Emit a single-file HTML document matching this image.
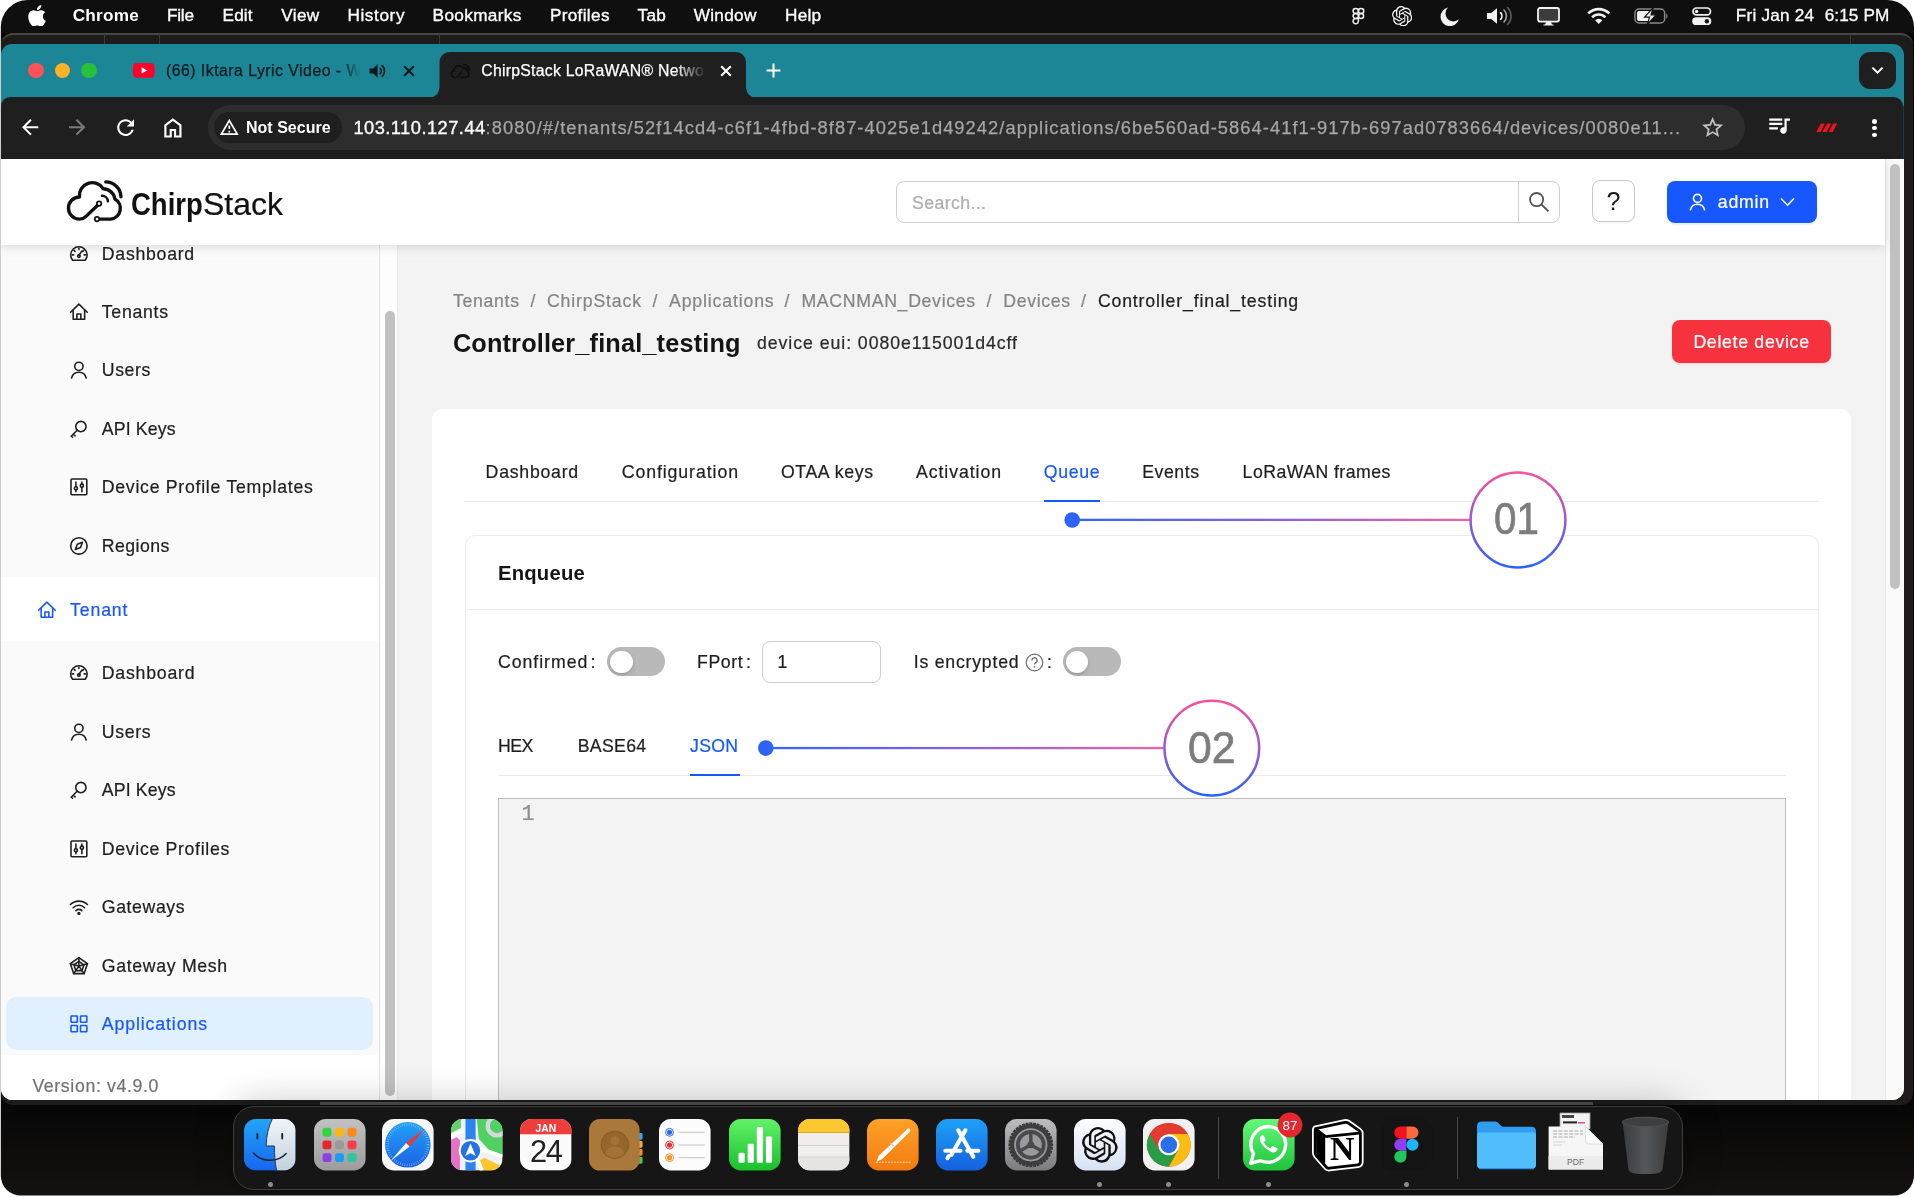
<!DOCTYPE html><html lang="en"><head><meta charset="utf-8"><title>ChirpStack LoRaWAN Network Server</title><style>html,body{margin:0;padding:0}body{width:1915px;height:1197px;overflow:hidden;background:#fff;position:relative;font-family:"Liberation Sans",sans-serif}.b{position:absolute;display:block}.t{position:absolute;white-space:pre;display:block}#screen{position:absolute;left:0;top:0;width:1915px;height:1197px;background:linear-gradient(#060606 1104px,#141210 1195px);will-change:transform}#win{position:absolute;left:1px;top:44px;width:1902.8px;height:1056.4px;border-radius:11px 11px 12px 12px;overflow:hidden}#wi{position:absolute;left:-1px;top:-44px;width:1915px;height:1197px}</style></head><body><div id="screen">
<div class="b" style="left:0px;top:0px;width:1915px;height:33px;background:#0f0f0f;"></div>
<div class="b" style="left:1px;top:32.6px;width:1912.4px;height:1072px;background:#1d1c1b;border-top:2px solid #474747;border-radius:12px;box-sizing:border-box;"></div>
<div class="b" style="left:104px;top:34px;width:1px;height:10px;background:#3a3a3a;"></div>
<div class="b" style="left:159px;top:34px;width:1px;height:10px;background:#3a3a3a;"></div>
<div class="b" style="left:439px;top:34px;width:1px;height:10px;background:#3a3a3a;"></div>
<div class="b" style="left:1850px;top:34px;width:1px;height:10px;background:#3a3a3a;"></div>
<svg class="b" style="left:26.5px;top:4.5px;" width="20" height="21.5" viewBox="2 0 20 24"><path fill="#fff" d="M12.152 6.896c-.948 0-2.415-1.078-3.96-1.04-2.04.027-3.91 1.183-4.961 3.014-2.117 3.675-.546 9.103 1.519 12.09 1.013 1.454 2.208 3.09 3.792 3.039 1.52-.065 2.09-.987 3.935-.987 1.831 0 2.35.987 3.96.948 1.637-.026 2.676-1.48 3.676-2.948 1.156-1.688 1.636-3.325 1.662-3.415-.039-.013-3.182-1.221-3.22-4.857-.026-3.04 2.48-4.494 2.597-4.559-1.429-2.09-3.623-2.324-4.39-2.376-2-.156-3.675 1.09-4.61 1.09zM15.53 3.83c.843-1.012 1.4-2.427 1.245-3.83-1.207.052-2.662.805-3.532 1.818-.78.896-1.454 2.338-1.273 3.714 1.338.104 2.715-.688 3.559-1.701"/></svg>
<span class="t" style='left:72.70px;top:5.44px;font-size:17.2px;line-height:20.64px;color:#fff;font-weight:700;letter-spacing:0.229px;'>Chrome</span>
<span class="t" style='left:166.90px;top:5.44px;font-size:17.2px;line-height:20.64px;color:#fff;letter-spacing:-0.201px;-webkit-text-stroke:0.35px #fff;'>File</span>
<span class="t" style='left:222.60px;top:5.44px;font-size:17.2px;line-height:20.64px;color:#fff;letter-spacing:0.125px;-webkit-text-stroke:0.35px #fff;'>Edit</span>
<span class="t" style='left:281.20px;top:5.44px;font-size:17.2px;line-height:20.64px;color:#fff;letter-spacing:0.382px;-webkit-text-stroke:0.35px #fff;'>View</span>
<span class="t" style='left:347.40px;top:5.44px;font-size:17.2px;line-height:20.64px;color:#fff;letter-spacing:0.603px;-webkit-text-stroke:0.35px #fff;'>History</span>
<span class="t" style='left:432.60px;top:5.44px;font-size:17.2px;line-height:20.64px;color:#fff;letter-spacing:0.341px;-webkit-text-stroke:0.35px #fff;'>Bookmarks</span>
<span class="t" style='left:549.90px;top:5.44px;font-size:17.2px;line-height:20.64px;color:#fff;letter-spacing:0.327px;-webkit-text-stroke:0.35px #fff;'>Profiles</span>
<span class="t" style='left:637.60px;top:5.44px;font-size:17.2px;line-height:20.64px;color:#fff;letter-spacing:0.191px;-webkit-text-stroke:0.35px #fff;'>Tab</span>
<span class="t" style='left:693.70px;top:5.44px;font-size:17.2px;line-height:20.64px;color:#fff;letter-spacing:0.312px;-webkit-text-stroke:0.35px #fff;'>Window</span>
<span class="t" style='left:785.00px;top:5.44px;font-size:17.2px;line-height:20.64px;color:#fff;letter-spacing:0.214px;-webkit-text-stroke:0.35px #fff;'>Help</span>
<span class="t" style='left:1735.80px;top:5.44px;font-size:17.2px;line-height:20.64px;color:#fff;letter-spacing:0.198px;-webkit-text-stroke:0.3px #fff;'>Fri Jan 24</span>
<span class="t" style='left:1824.70px;top:5.44px;font-size:17.2px;line-height:20.64px;color:#fff;letter-spacing:0.097px;-webkit-text-stroke:0.3px #fff;'>6:15 PM</span>
<svg class="b" style="left:1351.6px;top:7.4px;" width="13.4" height="18" viewBox="0 0 15 19"><g fill="none" stroke="#f2f2f2" stroke-width="1.7"><rect x="1.2" y="1" width="6" height="5.6" rx="2.8"/><rect x="7.2" y="1" width="6" height="5.6" rx="2.8"/><rect x="1.2" y="6.6" width="6" height="5.6" rx="2.8"/><circle cx="10.2" cy="9.4" r="2.8"/><path d="M7.2 12.2v2.9a3 3 0 1 1-3-2.9z"/></g></svg>
<svg class="b" style="left:1392px;top:5.8px;" width="20.4" height="20.4" viewBox="0 0 24 24"><path fill="#f2f2f2" d="M22.2819 9.8211a5.9847 5.9847 0 0 0-.5157-4.9108 6.0462 6.0462 0 0 0-6.5098-2.9A6.0651 6.0651 0 0 0 4.9807 4.1818a5.9847 5.9847 0 0 0-3.9977 2.9 6.0462 6.0462 0 0 0 .7427 7.0966 5.98 5.98 0 0 0 .511 4.9107 6.051 6.051 0 0 0 6.5146 2.9001A5.9847 5.9847 0 0 0 13.2599 24a6.0557 6.0557 0 0 0 5.7718-4.2058 5.9894 5.9894 0 0 0 3.9977-2.9001 6.0557 6.0557 0 0 0-.7475-7.0729zm-9.022 12.6081a4.4755 4.4755 0 0 1-2.8764-1.0408l.1419-.0804 4.7783-2.7582a.7948.7948 0 0 0 .3927-.6813v-6.7369l2.02 1.1686a.071.071 0 0 1 .038.052v5.5826a4.504 4.504 0 0 1-4.4945 4.4944zm-9.6607-4.1254a4.4708 4.4708 0 0 1-.5346-3.0137l.142.0852 4.783 2.7582a.7712.7712 0 0 0 .7806 0l5.8428-3.3685v2.3324a.0804.0804 0 0 1-.0332.0615L9.74 19.9502a4.4992 4.4992 0 0 1-6.1408-1.6464zM2.3408 7.8956a4.485 4.485 0 0 1 2.3655-1.9728V11.6a.7664.7664 0 0 0 .3879.6765l5.8144 3.3543-2.0201 1.1685a.0757.0757 0 0 1-.071 0l-4.8303-2.7865A4.504 4.504 0 0 1 2.3408 7.872zm16.5963 3.8558L13.1038 8.364 15.1192 7.2a.0757.0757 0 0 1 .071 0l4.8303 2.7913a4.4944 4.4944 0 0 1-.6765 8.1042v-5.6772a.79.79 0 0 0-.407-.667zm2.0107-3.0231l-.142-.0852-4.7735-2.7818a.7759.7759 0 0 0-.7854 0L9.409 9.2297V6.8974a.0662.0662 0 0 1 .0284-.0615l4.8303-2.7866a4.4992 4.4992 0 0 1 6.6802 4.66zM8.3065 12.863l-2.02-1.1638a.0804.0804 0 0 1-.038-.0567V6.0742a4.4992 4.4992 0 0 1 7.3757-3.4537l-.142.0805L8.704 5.459a.7948.7948 0 0 0-.3927.6813zm1.0976-2.3654l2.602-1.4998 2.6069 1.4998v2.9994l-2.5974 1.4997-2.6067-1.4997Z"/></svg>
<svg class="b" style="left:1440px;top:6.5px;" width="19.5" height="19.5" viewBox="0 0 20 20"><path fill="#f2f2f2" d="M8.2 0.6A9.6 9.6 0 1 0 19.4 12.6 7.9 7.9 0 0 1 8.2 0.6z"/></svg>
<svg class="b" style="left:1486px;top:6px;" width="28" height="20" viewBox="0 0 28 20"><path fill="#f2f2f2" d="M1 7h4.2L11 2.2v15.6L5.2 13H1z"/><g fill="none" stroke-linecap="round" stroke-width="1.7"><path stroke="#f2f2f2" d="M14.6 6.6a5 5 0 0 1 0 6.8"/><path stroke="#9a9a9a" d="M18 4a8.6 8.6 0 0 1 0 12"/><path stroke="#5a5a5a" d="M21.6 1.6a12 12 0 0 1 0 16.8"/></g></svg>
<svg class="b" style="left:1537px;top:7px;" width="23" height="19" viewBox="0 0 23 19"><rect x="1" y="1" width="21" height="13.6" rx="2" fill="#3d3d3d" stroke="#f2f2f2" stroke-width="1.8"/><path fill="#f2f2f2" d="M9 15h5l1 2.4h1.6V18.6H6.4V17.4H8z"/></svg>
<svg class="b" style="left:1586.5px;top:7px;" width="23.5" height="17.5" viewBox="0 0 24 18"><g fill="none" stroke="#f2f2f2" stroke-width="2.7" stroke-linecap="butt"><path d="M1.2 6.6a15.4 15.4 0 0 1 21.6 0"/><path d="M5.2 10.6a9.6 9.6 0 0 1 13.6 0"/></g><path fill="#f2f2f2" d="M12 17.6l-3.7-3.9a5.2 5.2 0 0 1 7.4 0z"/></svg>
<svg class="b" style="left:1633.5px;top:8px;" width="35" height="16" viewBox="0 0 35 16"><rect x="1" y="1" width="29.6" height="14" rx="4" fill="none" stroke="#8a8a8a" stroke-width="1.5"/><rect x="3" y="3" width="13" height="10" rx="2" fill="#f2f2f2"/><path d="M32.2 5.4c1.6.4 1.6 4.8 0 5.2z" fill="#8a8a8a"/><path fill="#f2f2f2" stroke="#0f0f0f" stroke-width="1.2" d="M19.4 -0.6L10.6 9.2h5l-2.4 7.6L22 6.8h-5z"/></svg>
<svg class="b" style="left:1692px;top:6.8px;" width="19.5" height="18.4" viewBox="0 0 19.5 18.4"><rect x="1" y="1" width="17.5" height="6.8" rx="3.4" fill="none" stroke="#f2f2f2" stroke-width="1.7"/><circle cx="4.6" cy="4.4" r="1.7" fill="#f2f2f2"/><rect x="0.2" y="10.2" width="19.1" height="8" rx="4" fill="#f2f2f2"/><circle cx="14.9" cy="14.2" r="2.2" fill="#0f0f0f"/></svg>
<div id="win"><div id="wi">
<div class="b" style="left:0px;top:44px;width:1904px;height:62px;background:#1c8696;"></div>
<div class="b" style="left:0px;top:106px;width:1904px;height:54px;background:#1b3a48;"></div>
<div class="b" style="left:1px;top:97px;width:1902px;height:62.2px;background:#1f1f1f;border-radius:9px 9px 0 0;"></div>
<svg class="b" style="left:425px;top:50px;" width="340" height="48" viewBox="425 50 340 48"><path fill="#1f1f1f" d="M428 98 C436 97.5 439.5 93 439.5 86 V63 C439.5 56 444 52 450.5 52 H735 C741.5 52 746 56 746 63 V86 C746 93 749.5 97.5 758 98 Z"/></svg>
<div class="b" style="left:28.400000000000002px;top:62.8px;width:15.6px;height:15.6px;border-radius:50%;background:#fe5258;"></div>
<div class="b" style="left:54.800000000000004px;top:62.8px;width:15.6px;height:15.6px;border-radius:50%;background:#fdb226;"></div>
<div class="b" style="left:81.3px;top:62.8px;width:15.6px;height:15.6px;border-radius:50%;background:#27c13c;"></div>
<svg class="b" style="left:133px;top:63.2px;" width="21.6" height="14.8" viewBox="0 0 21.6 14.8"><rect width="21.6" height="14.8" rx="4" fill="#ff0229"/><path fill="#fff" d="M8.6 4.2l5.6 3.2-5.6 3.2z"/></svg>
<span class="t" style='left:165.90px;top:61.68px;font-size:15.8px;line-height:18.96px;color:#0c181c;letter-spacing:0.496px;-webkit-text-stroke:0.25px #0c181c;-webkit-mask-image:linear-gradient(90deg,#000 90%,rgba(0,0,0,0) 99%);mask-image:linear-gradient(90deg,#000 90%,rgba(0,0,0,0) 99%);'>(66) Iktara Lyric Video - W</span>
<svg class="b" style="left:368.5px;top:62.5px;" width="17" height="16" viewBox="0 0 17 16"><path fill="#0c181c" d="M0.6 5.4h3.6L8.6 1.2v13.6L4.2 10.6H0.6z"/><g fill="none" stroke="#0c181c" stroke-width="1.7" stroke-linecap="round"><path d="M11.2 5.4a3.6 3.6 0 0 1 0 5.2"/><path d="M13.2 2.6a7.4 7.4 0 0 1 0 10.8"/></g></svg>
<svg class="b" style="left:402.5px;top:64.6px;" width="12" height="12" viewBox="0 0 12 12"><path d="M1.2 1.2l9.6 9.6M10.8 1.2l-9.6 9.6" stroke="#0c181c" stroke-width="2" fill="none"/></svg>
<svg class="b" style="left:449.5px;top:60.5px;" width="21" height="20" viewBox="0 0 21 20"><g fill="none" stroke="#0e0e0e" stroke-width="1.6" stroke-linecap="round"><path d="M6 16.5H4.8a3.6 3.6 0 0 1-.6-7.1 4.6 4.6 0 0 1 8.6-2.2 4.2 4.2 0 0 1 5.6 4 3.4 3.4 0 0 1-2.2 5.2H11"/><path d="M7 16.2l4.6-5.2"/><path d="M13.2 6.2a4 4 0 0 1 3.4 3.4M13.6 3.4a6.6 6.6 0 0 1 5.8 5.8"/></g></svg>
<span class="t" style='left:481.30px;top:61.68px;font-size:15.8px;line-height:18.96px;color:#fff;letter-spacing:0.251px;-webkit-text-stroke:0.25px #fff;-webkit-mask-image:linear-gradient(90deg,#000 87%,rgba(0,0,0,.12) 99%);mask-image:linear-gradient(90deg,#000 87%,rgba(0,0,0,.12) 99%);'>ChirpStack LoRaWAN® Netwo</span>
<svg class="b" style="left:719.5px;top:64.6px;" width="12" height="12" viewBox="0 0 12 12"><path d="M1.2 1.2l9.6 9.6M10.8 1.2l-9.6 9.6" stroke="#fff" stroke-width="2" fill="none"/></svg>
<svg class="b" style="left:765.5px;top:63px;" width="15" height="15" viewBox="0 0 15 15"><path d="M7.5 0.6v13.8M0.6 7.5h13.8" stroke="#fff" stroke-width="2.1" fill="none"/></svg>
<div class="b" style="left:1859px;top:52px;width:36.8px;height:36.8px;background:#1f1f1f;border-radius:11px;"></div>
<svg class="b" style="left:1871px;top:65.8px;" width="13" height="9" viewBox="0 0 13 9"><path d="M1.4 1.6l5.1 5.1 5.1-5.1" stroke="#fff" stroke-width="2" fill="none"/></svg>
<svg class="b" style="left:17.7px;top:115.3px;" width="24.4" height="24.4" viewBox="0 0 24 24"><path fill="#fff" d="M20 11H7.83l5.59-5.59L12 4l-8 8 8 8 1.41-1.41L7.83 13H20v-2z"/></svg>
<svg class="b" style="left:64.7px;top:115.3px;" width="24.4" height="24.4" viewBox="0 0 24 24"><path fill="#7b7b7b" d="M12 4l-1.41 1.41L16.17 11H4v2h12.17l-5.58 5.59L12 20l8-8z"/></svg>
<svg class="b" style="left:112.8px;top:114.9px;" width="25.2" height="25.2" viewBox="0 0 24 24"><path fill="#fff" d="M17.65 6.35C16.2 4.9 14.21 4 12 4c-4.42 0-7.99 3.58-7.99 8s3.57 8 7.99 8c3.73 0 6.84-2.55 7.73-6h-2.08c-.82 2.33-3.04 4-5.65 4-3.31 0-6-2.69-6-6s2.69-6 6-6c1.66 0 3.14.69 4.22 1.78L13 11h7V4l-2.35 2.35z"/></svg>
<svg class="b" style="left:159.5px;top:114.6px;" width="25.8" height="25.8" viewBox="0 0 24 24"><path fill="#fff" d="M6 19h3v-6h6v6h3v-9l-6-4.5L6 10zm-2 2V9l8-6 8 6v12h-7v-6h-2v6z"/></svg>
<div class="b" style="left:207.5px;top:105.2px;width:1537px;height:44.5px;background:#2d2d2d;border-radius:22.3px;"></div>
<div class="b" style="left:214px;top:111.8px;width:128px;height:31.4px;background:#1f1f1f;border-radius:16px;"></div>
<svg class="b" style="left:219.1px;top:116.9px;" width="20.6" height="20.6" viewBox="0 0 24 24"><path fill="#fff" d="M1 21h22L12 2 1 21zm3.47-2L12 5.99 19.53 19H4.47zM11 16h2v2h-2zm0-6h2v4h-2z"/></svg>
<span class="t" style='left:246.00px;top:118.46px;font-size:16px;line-height:19.2px;color:#fff;font-weight:700;letter-spacing:0.015px;'>Not Secure</span>
<span class="t" style='left:353.40px;top:116.88px;font-size:18.3px;line-height:21.96px;color:#fff;letter-spacing:0.468px;-webkit-text-stroke:0.3px #fff;'>103.110.127.44</span>
<span class="t" style='left:485.60px;top:116.88px;font-size:18.3px;line-height:21.96px;color:#a6a6a6;letter-spacing:1.063px;-webkit-text-stroke:0.25px #a6a6a6;'>:8080/#/tenants/52f14cd4-c6f1-4fbd-8f87-4025e1d49242/applications/6be560ad-5864-41f1-917b-697ad0783664/devices/0080e11...</span>
<svg class="b" style="left:1699.9px;top:115.2px;" width="25.2" height="25.2" viewBox="0 0 24 24"><path fill="#c4c4c4" d="M22 9.24l-7.19-.62L12 2 9.19 8.63 2 9.24l5.46 4.73L5.82 21 12 17.27 18.18 21l-1.63-7.03L22 9.24zM12 15.4l-3.76 2.27 1-4.28-3.32-2.88 4.38-.38L12 6.1l1.71 4.04 4.38.38-3.32 2.88 1 4.28L12 15.4z"/></svg>
<svg class="b" style="left:1765.7px;top:111.9px;" width="26.1" height="26.1" viewBox="0 0 24 24"><path fill="#fff" d="M15 6H3v2h12V6zm0 4H3v2h12v-2zM3 16h8v-2H3v2zM17 6v8.18c-.31-.11-.65-.18-1-.18-1.66 0-3 1.34-3 3s1.34 3 3 3 3-1.34 3-3V8h3V6h-5z"/></svg>
<svg class="b" style="left:1816px;top:123.4px;" width="21.4" height="9.2" viewBox="0 0 21.4 9.2"><path fill="#f3121c" d="M0.4 9l4.4-8.6h4L4.4 9zM6.6 9L11 .4h4L10.6 9zM12.8 9l4.4-8.6h4L16.8 9z"/></svg>
<div class="b" style="left:1872.2px;top:119.0px;width:4.6px;height:4.6px;border-radius:50%;background:#fff;"></div>
<div class="b" style="left:1872.2px;top:125.7px;width:4.6px;height:4.6px;border-radius:50%;background:#fff;"></div>
<div class="b" style="left:1872.2px;top:132.5px;width:4.6px;height:4.6px;border-radius:50%;background:#fff;"></div>
<div class="b" style="left:0px;top:159px;width:1904px;height:942px;background:#f3f3f3;"></div>
<div class="b" style="left:0px;top:244px;width:379.3px;height:856px;background:#fafafa;"></div>
<div class="b" style="left:378.6px;top:244px;width:19.6px;height:856px;background:#fdfdfd;border-left:1.6px solid #e4e4e4;border-right:1px solid #e9e9e9;box-sizing:border-box;"></div>
<div class="b" style="left:385px;top:310.5px;width:10px;height:785px;background:#c1c1c1;border-radius:5px;"></div>
<svg class="b" style="left:69px;top:243.5px;" width="19.8" height="19.8" viewBox="0 0 20 20"><g fill="none" stroke="#1f1f1f" stroke-width="1.6" stroke-linecap="round" stroke-linejoin="round"><path d="M3.6 16.4h12.8a8.3 8.3 0 1 0-12.8 0z"/><path d="M10 11.4l3-4.2"/><circle cx="10" cy="12.2" r="1.3"/><path d="M10 4.3v1.2M5.2 6.5l.9.9M14.8 6.5l-.9.9M3.4 11h1.2M15.4 11h1.2"/></g></svg>
<span class="t" style='left:101.80px;top:243.54px;font-size:17.7px;line-height:21.24px;color:#1f1f1f;letter-spacing:0.734px;-webkit-text-stroke:0.22px;'>Dashboard</span>
<svg class="b" style="left:69px;top:301.9px;" width="19.8" height="19.8" viewBox="0 0 20 20"><g fill="none" stroke="#1f1f1f" stroke-width="1.6" stroke-linecap="round" stroke-linejoin="round"><path d="M1.6 10.4L10 2.2l8.4 8.2"/><path d="M4.2 8.4v9h11.6v-9"/><path d="M8 17.4v-5.2h4v5.2"/></g></svg>
<span class="t" style='left:101.80px;top:301.94px;font-size:17.7px;line-height:21.24px;color:#1f1f1f;letter-spacing:0.724px;-webkit-text-stroke:0.22px;'>Tenants</span>
<svg class="b" style="left:69px;top:360.4px;" width="19.8" height="19.8" viewBox="0 0 20 20"><g fill="none" stroke="#1f1f1f" stroke-width="1.6" stroke-linecap="round" stroke-linejoin="round"><circle cx="10" cy="6.4" r="4.2"/><path d="M2.6 18.2a7.6 7.6 0 0 1 14.8 0"/></g></svg>
<span class="t" style='left:101.80px;top:360.44px;font-size:17.7px;line-height:21.24px;color:#1f1f1f;letter-spacing:0.599px;-webkit-text-stroke:0.22px;'>Users</span>
<svg class="b" style="left:69px;top:418.9px;" width="19.8" height="19.8" viewBox="0 0 20 20"><g fill="none" stroke="#1f1f1f" stroke-width="1.6" stroke-linecap="round" stroke-linejoin="round"><circle cx="12" cy="7.6" r="5.2"/><path d="M8.2 11.4l-6 6M4.4 15.2l1.8 1.8M2.4 17.2l1.2 1.2"/></g></svg>
<span class="t" style='left:101.80px;top:418.94px;font-size:17.7px;line-height:21.24px;color:#1f1f1f;letter-spacing:0.150px;-webkit-text-stroke:0.22px;'>API Keys</span>
<svg class="b" style="left:69px;top:477.4px;" width="19.8" height="19.8" viewBox="0 0 20 20"><g fill="none" stroke="#1f1f1f" stroke-width="1.6" stroke-linecap="round" stroke-linejoin="round"><rect x="2" y="2" width="16" height="16" rx="1"/><path d="M7 5.2v4.4M7 13.2v1.6M13 5.2v1.8M13 10.6v4.2"/><circle cx="7" cy="11.4" r="1.6"/><circle cx="13" cy="8.8" r="1.6"/></g></svg>
<span class="t" style='left:101.80px;top:477.44px;font-size:17.7px;line-height:21.24px;color:#1f1f1f;letter-spacing:0.725px;-webkit-text-stroke:0.22px;'>Device Profile Templates</span>
<svg class="b" style="left:69px;top:535.9px;" width="19.8" height="19.8" viewBox="0 0 20 20"><g fill="none" stroke="#1f1f1f" stroke-width="1.6" stroke-linecap="round" stroke-linejoin="round"><circle cx="10" cy="10" r="8.3"/><path d="M13.6 6.4l-2 5.2-5.2 2 2-5.2z"/></g></svg>
<span class="t" style='left:101.80px;top:535.94px;font-size:17.7px;line-height:21.24px;color:#1f1f1f;letter-spacing:0.449px;-webkit-text-stroke:0.22px;'>Regions</span>
<div class="b" style="left:0px;top:577px;width:379.3px;height:64px;background:#fff;"></div>
<svg class="b" style="left:37px;top:599.9px;" width="19.8" height="19.8" viewBox="0 0 20 20"><g fill="none" stroke="#1657ff" stroke-width="1.6" stroke-linecap="round" stroke-linejoin="round"><path d="M1.6 10.4L10 2.2l8.4 8.2"/><path d="M4.2 8.4v9h11.6v-9"/><path d="M8 17.4v-5.2h4v5.2"/></g></svg>
<span class="t" style='left:70.00px;top:599.54px;font-size:17.7px;line-height:21.24px;color:#1657ff;letter-spacing:0.878px;-webkit-text-stroke:0.22px;'>Tenant</span>
<svg class="b" style="left:69px;top:663.3px;" width="19.8" height="19.8" viewBox="0 0 20 20"><g fill="none" stroke="#1f1f1f" stroke-width="1.6" stroke-linecap="round" stroke-linejoin="round"><path d="M3.6 16.4h12.8a8.3 8.3 0 1 0-12.8 0z"/><path d="M10 11.4l3-4.2"/><circle cx="10" cy="12.2" r="1.3"/><path d="M10 4.3v1.2M5.2 6.5l.9.9M14.8 6.5l-.9.9M3.4 11h1.2M15.4 11h1.2"/></g></svg>
<span class="t" style='left:101.80px;top:663.34px;font-size:17.7px;line-height:21.24px;color:#1f1f1f;letter-spacing:0.784px;-webkit-text-stroke:0.22px;'>Dashboard</span>
<svg class="b" style="left:69px;top:721.8px;" width="19.8" height="19.8" viewBox="0 0 20 20"><g fill="none" stroke="#1f1f1f" stroke-width="1.6" stroke-linecap="round" stroke-linejoin="round"><circle cx="10" cy="6.4" r="4.2"/><path d="M2.6 18.2a7.6 7.6 0 0 1 14.8 0"/></g></svg>
<span class="t" style='left:101.80px;top:721.84px;font-size:17.7px;line-height:21.24px;color:#1f1f1f;letter-spacing:0.649px;-webkit-text-stroke:0.22px;'>Users</span>
<svg class="b" style="left:69px;top:780.3px;" width="19.8" height="19.8" viewBox="0 0 20 20"><g fill="none" stroke="#1f1f1f" stroke-width="1.6" stroke-linecap="round" stroke-linejoin="round"><circle cx="12" cy="7.6" r="5.2"/><path d="M8.2 11.4l-6 6M4.4 15.2l1.8 1.8M2.4 17.2l1.2 1.2"/></g></svg>
<span class="t" style='left:101.80px;top:780.34px;font-size:17.7px;line-height:21.24px;color:#1f1f1f;letter-spacing:0.150px;-webkit-text-stroke:0.22px;'>API Keys</span>
<svg class="b" style="left:69px;top:838.8px;" width="19.8" height="19.8" viewBox="0 0 20 20"><g fill="none" stroke="#1f1f1f" stroke-width="1.6" stroke-linecap="round" stroke-linejoin="round"><rect x="2" y="2" width="16" height="16" rx="1"/><path d="M7 5.2v4.4M7 13.2v1.6M13 5.2v1.8M13 10.6v4.2"/><circle cx="7" cy="11.4" r="1.6"/><circle cx="13" cy="8.8" r="1.6"/></g></svg>
<span class="t" style='left:101.80px;top:838.84px;font-size:17.7px;line-height:21.24px;color:#1f1f1f;letter-spacing:0.681px;-webkit-text-stroke:0.22px;'>Device Profiles</span>
<svg class="b" style="left:69px;top:897.3px;" width="19.8" height="19.8" viewBox="0 0 20 20"><g fill="none" stroke="#1f1f1f" stroke-width="1.6" stroke-linecap="round" stroke-linejoin="round"><path d="M1.4 7.6a12.4 12.4 0 0 1 17.2 0M4.2 10.8a8.2 8.2 0 0 1 11.6 0M7 13.8a4.2 4.2 0 0 1 6 0"/><circle cx="10" cy="16.6" r="0.9" fill="#1f1f1f"/></g></svg>
<span class="t" style='left:101.80px;top:897.34px;font-size:17.7px;line-height:21.24px;color:#1f1f1f;letter-spacing:0.592px;-webkit-text-stroke:0.22px;'>Gateways</span>
<svg class="b" style="left:69px;top:955.8px;" width="19.8" height="19.8" viewBox="0 0 20 20"><g fill="none" stroke="#1f1f1f" stroke-width="1.6" stroke-linecap="round" stroke-linejoin="round"><path d="M10 1.6l8.6 6.2-3.3 10H4.7l-3.3-10z"/><path d="M10 5.4l5 3.6-1.9 5.8H6.9L5 9z"/><path d="M10 1.6v8.6M1.4 7.8l8.6 2.4M18.6 7.8L10 10.2M4.7 17.8l5.3-7.6M15.3 17.8L10 10.2"/></g></svg>
<span class="t" style='left:101.80px;top:955.84px;font-size:17.7px;line-height:21.24px;color:#1f1f1f;letter-spacing:0.676px;-webkit-text-stroke:0.22px;'>Gateway Mesh</span>
<div class="b" style="left:5.5px;top:997.2px;width:367px;height:53px;background:#e1f0ff;border-radius:10px;"></div>
<svg class="b" style="left:69px;top:1014.3px;" width="19.8" height="19.8" viewBox="0 0 20 20"><g fill="none" stroke="#1657ff" stroke-width="1.6" stroke-linecap="round" stroke-linejoin="round"><rect x="2" y="2" width="6.4" height="6.4" rx=".6"/><rect x="11.6" y="2" width="6.4" height="6.4" rx=".6"/><rect x="2" y="11.6" width="6.4" height="6.4" rx=".6"/><rect x="11.6" y="11.6" width="6.4" height="6.4" rx=".6"/></g></svg>
<span class="t" style='left:101.80px;top:1014.34px;font-size:17.7px;line-height:21.24px;color:#1657ff;letter-spacing:0.893px;-webkit-text-stroke:0.22px;'>Applications</span>
<div class="b" style="left:0px;top:1055px;width:379.3px;height:46px;background:#fff;"></div>
<span class="t" style='left:32.40px;top:1076.14px;font-size:17.7px;line-height:21.24px;color:#737373;letter-spacing:0.642px;-webkit-text-stroke:0.22px;'>Version: v4.9.0</span>
<span class="t" style='left:452.90px;top:291.14px;font-size:17.7px;line-height:21.24px;color:#858585;letter-spacing:0.691px;-webkit-text-stroke:0.22px;'>Tenants</span>
<span class="t" style='left:530.60px;top:291.14px;font-size:17.7px;line-height:21.24px;color:#858585;letter-spacing:1.478px;-webkit-text-stroke:0.22px;'>/</span>
<span class="t" style='left:547.00px;top:291.14px;font-size:17.7px;line-height:21.24px;color:#858585;letter-spacing:0.832px;-webkit-text-stroke:0.22px;'>ChirpStack</span>
<span class="t" style='left:652.40px;top:291.14px;font-size:17.7px;line-height:21.24px;color:#858585;letter-spacing:1.478px;-webkit-text-stroke:0.22px;'>/</span>
<span class="t" style='left:669.00px;top:291.14px;font-size:17.7px;line-height:21.24px;color:#858585;letter-spacing:0.848px;-webkit-text-stroke:0.22px;'>Applications</span>
<span class="t" style='left:784.60px;top:291.14px;font-size:17.7px;line-height:21.24px;color:#858585;letter-spacing:1.478px;-webkit-text-stroke:0.22px;'>/</span>
<span class="t" style='left:801.40px;top:291.14px;font-size:17.7px;line-height:21.24px;color:#858585;letter-spacing:0.690px;-webkit-text-stroke:0.22px;'>MACNMAN_Devices</span>
<span class="t" style='left:986.60px;top:291.14px;font-size:17.7px;line-height:21.24px;color:#858585;letter-spacing:1.478px;-webkit-text-stroke:0.22px;'>/</span>
<span class="t" style='left:1003.30px;top:291.14px;font-size:17.7px;line-height:21.24px;color:#858585;letter-spacing:0.630px;-webkit-text-stroke:0.22px;'>Devices</span>
<span class="t" style='left:1081.00px;top:291.14px;font-size:17.7px;line-height:21.24px;color:#858585;letter-spacing:1.478px;-webkit-text-stroke:0.22px;'>/</span>
<span class="t" style='left:1097.90px;top:291.14px;font-size:17.7px;line-height:21.24px;color:#1f1f1f;letter-spacing:0.843px;-webkit-text-stroke:0.22px;'>Controller_final_testing</span>
<span class="t" style='left:452.90px;top:328.21px;font-size:25.3px;line-height:30.36px;color:#141414;font-weight:700;letter-spacing:0.159px;'>Controller_final_testing</span>
<span class="t" style='left:757.00px;top:332.54px;font-size:17.7px;line-height:21.24px;color:#2a2a2a;letter-spacing:0.948px;-webkit-text-stroke:0.22px;'>device eui: 0080e115001d4cff</span>
<div class="b" style="left:1671.6px;top:320.4px;width:159.4px;height:42.6px;background:#f7323f;border-radius:8px;box-shadow:0 2px 2px rgba(255,38,5,.08);"></div>
<span class="t" style='left:1693.40px;top:332.24px;font-size:17.7px;line-height:21.24px;color:#fff;letter-spacing:0.702px;-webkit-text-stroke:0.22px;'>Delete device</span>
<div class="b" style="left:431.8px;top:409px;width:1419.4px;height:700px;background:#fff;border-radius:10px;"></div>
<span class="t" style='left:485.60px;top:462.24px;font-size:17.7px;line-height:21.24px;color:#1f1f1f;letter-spacing:0.759px;-webkit-text-stroke:0.22px;'>Dashboard</span>
<span class="t" style='left:621.70px;top:462.24px;font-size:17.7px;line-height:21.24px;color:#1f1f1f;letter-spacing:0.923px;-webkit-text-stroke:0.22px;'>Configuration</span>
<span class="t" style='left:781.00px;top:462.24px;font-size:17.7px;line-height:21.24px;color:#1f1f1f;letter-spacing:0.605px;-webkit-text-stroke:0.22px;'>OTAA keys</span>
<span class="t" style='left:916.00px;top:462.24px;font-size:17.7px;line-height:21.24px;color:#1f1f1f;letter-spacing:0.924px;-webkit-text-stroke:0.22px;'>Activation</span>
<span class="t" style='left:1043.70px;top:462.24px;font-size:17.7px;line-height:21.24px;color:#1657ff;letter-spacing:0.698px;-webkit-text-stroke:0.22px;'>Queue</span>
<span class="t" style='left:1142.30px;top:462.24px;font-size:17.7px;line-height:21.24px;color:#1f1f1f;letter-spacing:0.524px;-webkit-text-stroke:0.22px;'>Events</span>
<span class="t" style='left:1242.60px;top:462.24px;font-size:17.7px;line-height:21.24px;color:#1f1f1f;letter-spacing:0.448px;-webkit-text-stroke:0.22px;'>LoRaWAN frames</span>
<div class="b" style="left:464.6px;top:501px;width:1354.2px;height:1.2px;background:#ebebeb;"></div>
<div class="b" style="left:1043.5px;top:499.5px;width:56.5px;height:2.7px;background:#1657ff;"></div>
<div class="b" style="left:464.6px;top:535px;width:1354.2px;height:600px;background:#fff;border:1.2px solid #ececec;border-radius:10px;box-sizing:border-box;"></div>
<div class="b" style="left:465px;top:609px;width:1353px;height:1.2px;background:#ececec;"></div>
<span class="t" style='left:497.90px;top:560.99px;font-size:20.3px;line-height:24.36px;color:#141414;font-weight:700;letter-spacing:0.224px;'>Enqueue</span>
<span class="t" style='left:498.00px;top:652.34px;font-size:17.7px;line-height:21.24px;color:#1f1f1f;letter-spacing:0.963px;-webkit-text-stroke:0.22px;'>Confirmed</span>
<span class="t" style='left:590.60px;top:652.34px;font-size:17.7px;line-height:21.24px;color:#1f1f1f;-webkit-text-stroke:0.22px;'>:</span>
<div class="b" style="left:606.8px;top:647.4px;width:58px;height:29px;background:#b9b9b9;border-radius:14.5px;"></div>
<div class="b" style="left:610.0px;top:650.6px;width:22.6px;height:22.6px;background:#fff;border-radius:50%;box-shadow:0 2px 4px rgba(0,35,11,.2);"></div>
<div class="b" style="left:1062.7px;top:647.4px;width:58px;height:29px;background:#b9b9b9;border-radius:14.5px;"></div>
<div class="b" style="left:1065.9px;top:650.6px;width:22.6px;height:22.6px;background:#fff;border-radius:50%;box-shadow:0 2px 4px rgba(0,35,11,.2);"></div>
<span class="t" style='left:697.00px;top:652.34px;font-size:17.7px;line-height:21.24px;color:#1f1f1f;letter-spacing:0.613px;-webkit-text-stroke:0.22px;'>FPort</span>
<span class="t" style='left:746.00px;top:652.34px;font-size:17.7px;line-height:21.24px;color:#1f1f1f;-webkit-text-stroke:0.22px;'>:</span>
<div class="b" style="left:761.5px;top:641.2px;width:119.2px;height:41.6px;background:#fff;border:1.3px solid #cecece;border-radius:8px;box-sizing:border-box;"></div>
<span class="t" style='left:777.40px;top:652.34px;font-size:17.7px;line-height:21.24px;color:#1f1f1f;-webkit-text-stroke:0.22px;'>1</span>
<span class="t" style='left:913.80px;top:652.34px;font-size:17.7px;line-height:21.24px;color:#1f1f1f;letter-spacing:0.767px;-webkit-text-stroke:0.22px;'>Is encrypted</span>
<svg class="b" style="left:1025px;top:652.6px;" width="19" height="19" viewBox="0 0 19 19"><circle cx="9.5" cy="9.5" r="8.3" fill="none" stroke="#6e6e6e" stroke-width="1.2"/><path d="M6.9 7.4a2.6 2.6 0 1 1 3.9 2.2c-.9.5-1.3 1-1.3 2" fill="none" stroke="#6e6e6e" stroke-width="1.3"/><circle cx="9.5" cy="13.8" r=".9" fill="#6e6e6e"/></svg>
<span class="t" style='left:1047.00px;top:652.34px;font-size:17.7px;line-height:21.24px;color:#1f1f1f;-webkit-text-stroke:0.22px;'>:</span>
<span class="t" style='left:498.00px;top:736.34px;font-size:17.7px;line-height:21.24px;color:#1f1f1f;letter-spacing:-0.488px;-webkit-text-stroke:0.22px;'>HEX</span>
<span class="t" style='left:577.70px;top:736.34px;font-size:17.7px;line-height:21.24px;color:#1f1f1f;letter-spacing:0.325px;-webkit-text-stroke:0.22px;'>BASE64</span>
<span class="t" style='left:690.00px;top:736.34px;font-size:17.7px;line-height:21.24px;color:#1657ff;letter-spacing:0.304px;-webkit-text-stroke:0.22px;'>JSON</span>
<div class="b" style="left:497.9px;top:775.3px;width:1287.8px;height:1.2px;background:#ebebeb;"></div>
<div class="b" style="left:689.5px;top:773.6px;width:50px;height:2.7px;background:#1657ff;"></div>
<div class="b" style="left:497.9px;top:797.6px;width:1287.8px;height:320px;background:#f3f3f3;border:1.4px solid #bebebe;box-sizing:border-box;"></div>
<span class="t" style='left:521.60px;top:802.18px;font-size:21.6px;line-height:25.92px;color:#8f8f8f;font-family:"Liberation Mono", monospace;-webkit-text-stroke:0.22px;'>1</span>
<svg class="b" style="left:0px;top:0px;pointer-events:none;" width="1915" height="1197" viewBox="0 0 1915 1197"><defs><linearGradient id="gl" x1="0" x2="1" y1="0" y2="0"><stop offset="0" stop-color="#3364fa"/><stop offset=".5" stop-color="#8a62dc"/><stop offset="1" stop-color="#ea66a6"/></linearGradient><linearGradient id="gc" x1="0" x2="0" y1="0" y2="1"><stop offset="0" stop-color="#f6529a"/><stop offset=".5" stop-color="#9a58d8"/><stop offset="1" stop-color="#2a62ff"/></linearGradient></defs><rect x="1072" y="518.7" width="400" height="2.3" fill="url(#gl)"/><circle cx="1072.2" cy="520" r="7.8" fill="#2f63f6"/><circle cx="1518" cy="520" r="47.4" fill="#fff" stroke="url(#gc)" stroke-width="2.5"/><rect x="766" y="746.9" width="400" height="2.3" fill="url(#gl)"/><circle cx="765.8" cy="748.1" r="7.8" fill="#2f63f6"/><circle cx="1211.8" cy="748.2" r="47.4" fill="#fff" stroke="url(#gc)" stroke-width="2.5"/></svg>
<span class="t" style='left:1494.40px;top:493.35px;font-size:43.5px;line-height:52.2px;color:#7d7d7d;transform:scaleX(0.9263);transform-origin:0 50%;-webkit-text-stroke:0.7px #7d7d7d;'>01</span>
<span class="t" style='left:1188.30px;top:721.55px;font-size:43.5px;line-height:52.2px;color:#7d7d7d;transform:scaleX(0.9797);transform-origin:0 50%;-webkit-text-stroke:0.7px #7d7d7d;'>02</span>
<div class="b" style="left:1884.5px;top:159px;width:19.5px;height:942px;background:#fafafa;border-left:1px solid #e8e8e8;box-sizing:border-box;"></div>
<div class="b" style="left:1889.8px;top:163.6px;width:10px;height:425.6px;background:#c1c1c1;border-radius:5px;"></div>
<div class="b" style="left:0px;top:159px;width:1884.5px;height:85.5px;background:#fff;box-shadow:0 2px 10px rgba(0,0,0,.13);"></div>
<svg class="b" style="left:55px;top:170px;" width="240" height="65.04" viewBox="0 0 1915 519"><g fill="none" stroke="#111" stroke-width="27" stroke-linecap="round" stroke-linejoin="round"><path d="M340 282 L245 372 Q225 392 195 392 A88 88 0 0 1 195 216 A103 103 0 0 1 385 150 A95 95 0 0 1 478 232 A86 86 0 0 1 445 392 L362 392"/><path d="M405 95 A123 123 0 0 1 526 214"/><path d="M375 205 A47 47 0 0 1 422 250" stroke-width="20"/></g><circle cx="352" cy="268" r="18" fill="#fff" stroke="#111" stroke-width="14"/><circle cx="335" cy="392" r="18" fill="#fff" stroke="#111" stroke-width="14"/></svg>
<span class="t" style='left:130.80px;top:184.81px;font-size:32px;line-height:38.4px;color:#111;font-weight:700;transform:scaleX(0.8594);transform-origin:0 50%;'>Chirp</span>
<span class="t" style='left:202.80px;top:184.81px;font-size:32px;line-height:38.4px;color:#111;transform:scaleX(0.9991);transform-origin:0 50%;-webkit-text-stroke:0.22px;'>Stack</span>
<div class="b" style="left:896.2px;top:181.2px;width:663.6px;height:41.4px;background:#fff;border:1.3px solid #cfcfcf;border-radius:8px;box-sizing:border-box;"></div>
<div class="b" style="left:1518px;top:181.2px;width:1.3px;height:41.4px;background:#cfcfcf;"></div>
<span class="t" style='left:912.00px;top:192.54px;font-size:17.7px;line-height:21.24px;color:#adadad;letter-spacing:0.400px;-webkit-text-stroke:0.22px;'>Search...</span>
<svg class="b" style="left:1527px;top:190px;" width="24" height="24" viewBox="0 0 24 24"><circle cx="9.6" cy="9.6" r="6.6" fill="none" stroke="#555" stroke-width="1.8"/><path d="M14.4 14.4l7 7" stroke="#555" stroke-width="2" fill="none"/></svg>
<div class="b" style="left:1592.2px;top:179.6px;width:42.5px;height:42.2px;background:#fff;border:1.4px solid #c9c9c9;border-radius:8px;box-sizing:border-box;box-shadow:0 2px 1px rgba(0,0,0,.03);"></div>
<span class="t" style='left:1606.40px;top:185.79px;font-size:25px;line-height:30.0px;color:#1a1a1a;'>?</span>
<div class="b" style="left:1666.7px;top:180.7px;width:150.8px;height:42px;background:#1657ff;border-radius:8px;box-shadow:0 2px 2px rgba(5,95,255,.1);"></div>
<svg class="b" style="left:1687.5px;top:192px;" width="19" height="19.6" viewBox="0 0 20 20"><g fill="none" stroke="#fff" stroke-width="1.7" stroke-linecap="round"><circle cx="10" cy="6.4" r="4.2"/><path d="M2.6 18.4a7.6 7.6 0 0 1 14.8 0"/></g></svg>
<span class="t" style='left:1717.80px;top:192.14px;font-size:17.7px;line-height:21.24px;color:#fff;letter-spacing:0.803px;-webkit-text-stroke:0.22px;'>admin</span>
<svg class="b" style="left:1780.4px;top:196.6px;" width="15" height="10" viewBox="0 0 15 10"><path d="M1 1.4l6.5 6.8L14 1.4" fill="none" stroke="#fff" stroke-width="1.5"/></svg>
</div></div>
<div class="b" style="left:320px;top:1102.4px;width:1273px;height:2.2px;background:#505050;"></div>
<div class="b" style="left:232.5px;top:1106px;width:1450.5px;height:83.6px;background:#161616;border:1.2px solid #3e3e3e;border-radius:21px;box-sizing:border-box;box-shadow:0 0 38px rgba(0,0,0,.27);"></div>
<svg class="b" style="left:244.3px;top:1118.8px;overflow:visible;" width="51.6" height="51.6" viewBox="0 0 52 52"><defs><linearGradient id="fb" x1="0" y1="0" x2="0" y2="1"><stop offset="0" stop-color="#22a5f8"/><stop offset="1" stop-color="#1766ee"/></linearGradient><linearGradient id="fw" x1="0" y1="0" x2="0" y2="1"><stop offset="0" stop-color="#f1f4f7"/><stop offset="1" stop-color="#c3d2df"/></linearGradient><clipPath id="fc"><rect width="52" height="52" rx="12"/></clipPath></defs><g clip-path="url(#fc)"><rect width="52" height="52" fill="url(#fb)"/><path fill="url(#fw)" d="M28.500 0C24.500 8 22.600 17 22.300 27.200h8.300c0 9 .7 17 2.200 24.800H52V0z"/><path d="M28.500 0C24.500 8 22.600 17 22.300 27.200h8.300c0 9 .7 17 2.200 24.800" fill="none" stroke="#1a2a3a" stroke-width=".9"/></g><path d="M13.500 15v4.600M38.500 15v4.600" stroke="#15222e" stroke-width="1.9" stroke-linecap="round"/><path d="M9.500 34.300c8.500 9.600 24.500 9.800 33 .5" fill="none" stroke="#15222e" stroke-width="1.500" stroke-linecap="round"/></svg>
<svg class="b" style="left:313.6px;top:1118.8px;overflow:visible;" width="51.6" height="51.6" viewBox="0 0 52 52"><defs><linearGradient id="lg" x1="0" y1="0" x2="0" y2="1"><stop offset="0" stop-color="#c2c2c2"/><stop offset="1" stop-color="#9c9c9c"/></linearGradient></defs><rect x="0" y="0" width="52" height="52" rx="12" fill="url(#lg)" /><rect x="8.6" y="8.8" width="9" height="9" rx="2.4" fill="#35d33f"/><rect x="21.2" y="8.8" width="9" height="9" rx="2.4" fill="#fdb515"/><rect x="33.8" y="8.8" width="9" height="9" rx="2.4" fill="#fb8a16"/><rect x="8.6" y="21.6" width="9" height="9" rx="2.4" fill="#e8262a"/><rect x="21.2" y="21.6" width="9" height="9" rx="2.4" fill="#9a9a9a"/><rect x="33.8" y="21.6" width="9" height="9" rx="2.4" fill="#fb3d4a"/><rect x="8.6" y="34.400000000000006" width="9" height="9" rx="2.4" fill="#8a3fe8"/><rect x="21.2" y="34.400000000000006" width="9" height="9" rx="2.4" fill="#1d9bf6"/><rect x="33.8" y="34.400000000000006" width="9" height="9" rx="2.4" fill="#2dc5a0"/></svg>
<svg class="b" style="left:382.4px;top:1118.8px;overflow:visible;" width="51.6" height="51.6" viewBox="0 0 52 52"><defs><linearGradient id="sg" x1="0" y1="0" x2="0" y2="1"><stop offset="0" stop-color="#23a2f6"/><stop offset="1" stop-color="#1b62e6"/></linearGradient></defs><rect x="0" y="0" width="52" height="52" rx="12" fill="#f7f7f7" /><circle cx="26" cy="26" r="23" fill="url(#sg)"/><circle cx="26" cy="26" r="20.400" fill="none" stroke="#a9d4fb" stroke-width="2.600" stroke-dasharray="0.6 1.7" opacity=".75"/><path d="M43.600 9.400L24.200 24.200l3.600 3.600z" fill="#f0362f"/><path d="M8.400 42.600l19.400-14.800-3.600-3.600z" fill="#f7f7f7"/></svg>
<svg class="b" style="left:451.3px;top:1118.8px;overflow:visible;" width="51.6" height="51.6" viewBox="0 0 52 52"><defs><clipPath id="mc"><rect width="52" height="52" rx="12"/></clipPath></defs><g clip-path="url(#mc)"><rect width="52" height="52" fill="#f0f1f2"/><path d="M26 0h26v36L38 31 28 20z" fill="#4fd164"/><path d="M0 0h10v9L0 14z" fill="#62d36b"/><path d="M0 21l6-2.500 3 3V52H0z" fill="#e273c6"/><path d="M28.500 42l5-3 18.500 9v4H30z" fill="#fdc62e"/><path d="M14.600 0h10.200v52H14.600z" fill="#2a83ee"/><path d="M0 17l13-5M52 38L30 30M31 52L25 36" stroke="#fff" stroke-width="4" fill="none"/><circle cx="46.500" cy="7" r="9.500" fill="none" stroke="#d4d8dc" stroke-width="4.400"/></g><circle cx="19.600" cy="32" r="11.800" fill="#fff"/><circle cx="19.600" cy="32" r="9.800" fill="#2273ea"/><path d="M19.600 24.800l5.400 12.600-5.400-2.800-5.400 2.800z" fill="#fff"/></svg>
<svg class="b" style="left:520.2px;top:1118.8px;overflow:visible;" width="51.6" height="51.6" viewBox="0 0 52 52"><defs><clipPath id="cc"><rect width="52" height="52" rx="12"/></clipPath></defs><g clip-path="url(#cc)"><rect width="52" height="52" fill="#fbfbfb"/><rect width="52" height="15.4" fill="#ee3e3b"/></g><text x="26" y="12.6" text-anchor="middle" font-family="Liberation Sans, sans-serif" font-size="10.4" font-weight="700" fill="#fff">JAN</text><text x="26" y="43.6" text-anchor="middle" font-family="Liberation Sans, sans-serif" font-size="31" fill="#222" letter-spacing="-1.2">24</text></svg>
<svg class="b" style="left:589.3px;top:1118.8px;overflow:visible;" width="51.6" height="51.6" viewBox="0 0 52 52"><rect x="45" y="14" width="9" height="7" rx="1.5" fill="#3aa6f2"/><rect x="45" y="22" width="9" height="7" rx="1.5" fill="#f0a93a"/><rect x="45" y="30" width="9" height="7" rx="1.5" fill="#f08a2a"/><rect x="45" y="38" width="9" height="7" rx="1.5" fill="#4ec24e"/><rect x="0" y="0" width="51" height="52" rx="11" fill="#a9783a"/><circle cx="26" cy="26" r="13.6" fill="#94662b" stroke="#8a5d24" stroke-width="1.2"/><circle cx="26" cy="22" r="4.6" fill="#a27236"/><path d="M16.4 35a10 10 0 0 1 19.2 0 13.4 13.4 0 0 1-19.2 0z" fill="#a27236"/></svg>
<svg class="b" style="left:658.5px;top:1118.8px;overflow:visible;" width="51.6" height="51.6" viewBox="0 0 52 52"><rect x="0" y="0" width="52" height="52" rx="12" fill="#fcfcfc" /><circle cx="10.6" cy="13.4" r="4" fill="none" stroke="#2a6bf2" stroke-width="1"/><circle cx="10.6" cy="13.4" r="2.6" fill="#2a6bf2"/><path d="M19.4 13.4H46" stroke="#c4c4c4" stroke-width="1"/><circle cx="10.6" cy="26.2" r="4" fill="none" stroke="#ee2a3a" stroke-width="1"/><circle cx="10.6" cy="26.2" r="2.6" fill="#ee2a3a"/><path d="M19.4 26.2H46" stroke="#c4c4c4" stroke-width="1"/><circle cx="10.6" cy="39" r="4" fill="none" stroke="#f4932a" stroke-width="1"/><circle cx="10.6" cy="39" r="2.6" fill="#f4932a"/><path d="M19.4 39H46" stroke="#c4c4c4" stroke-width="1"/></svg>
<svg class="b" style="left:729px;top:1118.8px;overflow:visible;" width="51.6" height="51.6" viewBox="0 0 52 52"><defs><linearGradient id="ng" x1="0" y1="0" x2="0" y2="1"><stop offset="0" stop-color="#62f268"/><stop offset="1" stop-color="#18c02c"/></linearGradient></defs><rect x="0" y="0" width="52" height="52" rx="12" fill="url(#ng)" /><rect x="9.6" y="34" width="6.2" height="10" rx="1.2" fill="#fff"/><rect x="18.8" y="25" width="6.2" height="19" rx="1.2" fill="#fff"/><rect x="28" y="8" width="6.2" height="36" rx="1.2" fill="#fff"/><rect x="37.2" y="17.6" width="6.2" height="26.4" rx="1.2" fill="#fff"/></svg>
<svg class="b" style="left:797.7px;top:1118.8px;overflow:visible;" width="51.6" height="51.6" viewBox="0 0 52 52"><defs><clipPath id="nc"><rect width="52" height="52" rx="12"/></clipPath></defs><g clip-path="url(#nc)"><rect width="52" height="52" fill="#efeeec"/><rect width="52" height="13.6" fill="#fdc72f"/><path d="M0 13.6h52" stroke="#d9a81e" stroke-width="1"/><path d="M0 26.6h52M0 38.4h52" stroke="#cfcdca" stroke-width="1"/><rect y="39" width="52" height="13" fill="#e6e4e1"/></g></svg>
<svg class="b" style="left:866.8px;top:1118.8px;overflow:visible;" width="51.6" height="51.6" viewBox="0 0 52 52"><defs><linearGradient id="pg" x1="0" y1="0" x2="0" y2="1"><stop offset="0" stop-color="#fea226"/><stop offset="1" stop-color="#f37a12"/></linearGradient></defs><rect x="0" y="0" width="52" height="52" rx="12" fill="url(#pg)" /><path d="M9 43.6h35" stroke="#ffd9a8" stroke-width="1" stroke-dasharray="2 1"/><path d="M41.6 9.2a2.6 2.6 0 0 1 1.8 3.4L15.4 40.4 9.6 43l2.2-6z" fill="#fff"/><path d="M23.6 24l3.2 3.2" stroke="#c9c9c9" stroke-width="1.4"/></svg>
<svg class="b" style="left:935.6px;top:1118.8px;overflow:visible;" width="51.6" height="51.6" viewBox="0 0 52 52"><defs><linearGradient id="ag" x1="0" y1="0" x2="0" y2="1"><stop offset="0" stop-color="#1ea2f8"/><stop offset="1" stop-color="#1560de"/></linearGradient></defs><rect x="0" y="0" width="52" height="52" rx="12" fill="url(#ag)" /><g stroke="#fff" stroke-width="4.2" stroke-linecap="round" fill="none"><path d="M22.4 11.4L37.6 38M29.6 11.4L15.6 36M9.4 32h15.2M31.6 32h11M11.6 39.4l1.2-2"/></g></svg>
<svg class="b" style="left:1004.8px;top:1118.8px;overflow:visible;" width="51.6" height="51.6" viewBox="0 0 52 52"><defs><linearGradient id="tg" x1="0" y1="0" x2="0" y2="1"><stop offset="0" stop-color="#bdbdc1"/><stop offset="1" stop-color="#7c7c80"/></linearGradient></defs><rect x="0" y="0" width="52" height="52" rx="12" fill="url(#tg)" /><circle cx="26" cy="26" r="21.4" fill="#4c4c50"/><rect x="24.6" y="3.4" width="2.8" height="4" fill="#3a3a3c" transform="rotate(0 26 26)"/><rect x="24.6" y="3.4" width="2.8" height="4" fill="#3a3a3c" transform="rotate(10 26 26)"/><rect x="24.6" y="3.4" width="2.8" height="4" fill="#3a3a3c" transform="rotate(20 26 26)"/><rect x="24.6" y="3.4" width="2.8" height="4" fill="#3a3a3c" transform="rotate(30 26 26)"/><rect x="24.6" y="3.4" width="2.8" height="4" fill="#3a3a3c" transform="rotate(40 26 26)"/><rect x="24.6" y="3.4" width="2.8" height="4" fill="#3a3a3c" transform="rotate(50 26 26)"/><rect x="24.6" y="3.4" width="2.8" height="4" fill="#3a3a3c" transform="rotate(60 26 26)"/><rect x="24.6" y="3.4" width="2.8" height="4" fill="#3a3a3c" transform="rotate(70 26 26)"/><rect x="24.6" y="3.4" width="2.8" height="4" fill="#3a3a3c" transform="rotate(80 26 26)"/><rect x="24.6" y="3.4" width="2.8" height="4" fill="#3a3a3c" transform="rotate(90 26 26)"/><rect x="24.6" y="3.4" width="2.8" height="4" fill="#3a3a3c" transform="rotate(100 26 26)"/><rect x="24.6" y="3.4" width="2.8" height="4" fill="#3a3a3c" transform="rotate(110 26 26)"/><rect x="24.6" y="3.4" width="2.8" height="4" fill="#3a3a3c" transform="rotate(120 26 26)"/><rect x="24.6" y="3.4" width="2.8" height="4" fill="#3a3a3c" transform="rotate(130 26 26)"/><rect x="24.6" y="3.4" width="2.8" height="4" fill="#3a3a3c" transform="rotate(140 26 26)"/><rect x="24.6" y="3.4" width="2.8" height="4" fill="#3a3a3c" transform="rotate(150 26 26)"/><rect x="24.6" y="3.4" width="2.8" height="4" fill="#3a3a3c" transform="rotate(160 26 26)"/><rect x="24.6" y="3.4" width="2.8" height="4" fill="#3a3a3c" transform="rotate(170 26 26)"/><rect x="24.6" y="3.4" width="2.8" height="4" fill="#3a3a3c" transform="rotate(180 26 26)"/><rect x="24.6" y="3.4" width="2.8" height="4" fill="#3a3a3c" transform="rotate(190 26 26)"/><rect x="24.6" y="3.4" width="2.8" height="4" fill="#3a3a3c" transform="rotate(200 26 26)"/><rect x="24.6" y="3.4" width="2.8" height="4" fill="#3a3a3c" transform="rotate(210 26 26)"/><rect x="24.6" y="3.4" width="2.8" height="4" fill="#3a3a3c" transform="rotate(220 26 26)"/><rect x="24.6" y="3.4" width="2.8" height="4" fill="#3a3a3c" transform="rotate(230 26 26)"/><rect x="24.6" y="3.4" width="2.8" height="4" fill="#3a3a3c" transform="rotate(240 26 26)"/><rect x="24.6" y="3.4" width="2.8" height="4" fill="#3a3a3c" transform="rotate(250 26 26)"/><rect x="24.6" y="3.4" width="2.8" height="4" fill="#3a3a3c" transform="rotate(260 26 26)"/><rect x="24.6" y="3.4" width="2.8" height="4" fill="#3a3a3c" transform="rotate(270 26 26)"/><rect x="24.6" y="3.4" width="2.8" height="4" fill="#3a3a3c" transform="rotate(280 26 26)"/><rect x="24.6" y="3.4" width="2.8" height="4" fill="#3a3a3c" transform="rotate(290 26 26)"/><rect x="24.6" y="3.4" width="2.8" height="4" fill="#3a3a3c" transform="rotate(300 26 26)"/><rect x="24.6" y="3.4" width="2.8" height="4" fill="#3a3a3c" transform="rotate(310 26 26)"/><rect x="24.6" y="3.4" width="2.8" height="4" fill="#3a3a3c" transform="rotate(320 26 26)"/><rect x="24.6" y="3.4" width="2.8" height="4" fill="#3a3a3c" transform="rotate(330 26 26)"/><rect x="24.6" y="3.4" width="2.8" height="4" fill="#3a3a3c" transform="rotate(340 26 26)"/><rect x="24.6" y="3.4" width="2.8" height="4" fill="#3a3a3c" transform="rotate(350 26 26)"/><circle cx="26" cy="26" r="17.6" fill="#9a9a9e" stroke="#3a3a3c" stroke-width="1.6"/><circle cx="26" cy="26" r="13" fill="none" stroke="#4a4a4e" stroke-width="4"/><g stroke="#4a4a4e" stroke-width="3.4"><path d="M26 26V11M26 26l13 7.5M26 26l-13 7.5"/></g><circle cx="26" cy="26" r="3.4" fill="#4a4a4e"/></svg>
<svg class="b" style="left:1073.9px;top:1118.8px;overflow:visible;" width="51.6" height="51.6" viewBox="0 0 52 52"><defs><linearGradient id="gg" x1="0" y1="0" x2="0" y2="1"><stop offset="0" stop-color="#fdfdfe"/><stop offset="1" stop-color="#d6e2f4"/></linearGradient></defs><rect x="0" y="0" width="52" height="52" rx="12" fill="url(#gg)" /><path transform="translate(8 8) scale(1.5)" fill="#111" d="M22.2819 9.8211a5.9847 5.9847 0 0 0-.5157-4.9108 6.0462 6.0462 0 0 0-6.5098-2.9A6.0651 6.0651 0 0 0 4.9807 4.1818a5.9847 5.9847 0 0 0-3.9977 2.9 6.0462 6.0462 0 0 0 .7427 7.0966 5.98 5.98 0 0 0 .511 4.9107 6.051 6.051 0 0 0 6.5146 2.9001A5.9847 5.9847 0 0 0 13.2599 24a6.0557 6.0557 0 0 0 5.7718-4.2058 5.9894 5.9894 0 0 0 3.9977-2.9001 6.0557 6.0557 0 0 0-.7475-7.0729zm-9.022 12.6081a4.4755 4.4755 0 0 1-2.8764-1.0408l.1419-.0804 4.7783-2.7582a.7948.7948 0 0 0 .3927-.6813v-6.7369l2.02 1.1686a.071.071 0 0 1 .038.052v5.5826a4.504 4.504 0 0 1-4.4945 4.4944zm-9.6607-4.1254a4.4708 4.4708 0 0 1-.5346-3.0137l.142.0852 4.783 2.7582a.7712.7712 0 0 0 .7806 0l5.8428-3.3685v2.3324a.0804.0804 0 0 1-.0332.0615L9.74 19.9502a4.4992 4.4992 0 0 1-6.1408-1.6464zM2.3408 7.8956a4.485 4.485 0 0 1 2.3655-1.9728V11.6a.7664.7664 0 0 0 .3879.6765l5.8144 3.3543-2.0201 1.1685a.0757.0757 0 0 1-.071 0l-4.8303-2.7865A4.504 4.504 0 0 1 2.3408 7.872zm16.5963 3.8558L13.1038 8.364 15.1192 7.2a.0757.0757 0 0 1 .071 0l4.8303 2.7913a4.4944 4.4944 0 0 1-.6765 8.1042v-5.6772a.79.79 0 0 0-.407-.667zm2.0107-3.0231l-.142-.0852-4.7735-2.7818a.7759.7759 0 0 0-.7854 0L9.409 9.2297V6.8974a.0662.0662 0 0 1 .0284-.0615l4.8303-2.7866a4.4992 4.4992 0 0 1 6.6802 4.66zM8.3065 12.863l-2.02-1.1638a.0804.0804 0 0 1-.038-.0567V6.0742a4.4992 4.4992 0 0 1 7.3757-3.4537l-.142.0805L8.704 5.459a.7948.7948 0 0 0-.3927.6813zm1.0976-2.3654l2.602-1.4998 2.6069 1.4998v2.9994l-2.5974 1.4997-2.6067-1.4997Z"/></svg>
<svg class="b" style="left:1143.2px;top:1118.8px;overflow:visible;" width="51.6" height="51.6" viewBox="0 0 52 52"><rect x="0" y="0" width="52" height="52" rx="12" fill="#f1f1f1" /><circle cx="26" cy="26" r="22" fill="#e33b2e"/><path d="M26 26L6.9 15A22 22 0 0 0 26 48l9.5-16.5z" fill="#2a9b47"/><path d="M26 26l9.5 5.5L26 48A22 22 0 0 0 45.1 15H26z" fill="#fbbd13"/><path d="M26 15h19.1A22 22 0 0 0 6.9 15L16.5 31.5z" fill="#e33b2e"/><circle cx="26" cy="26" r="10.6" fill="#fff"/><circle cx="26" cy="26" r="8.4" fill="#2a6fe8"/></svg>
<svg class="b" style="left:1243.1px;top:1118.8px;overflow:visible;" width="51.6" height="51.6" viewBox="0 0 52 52"><defs><linearGradient id="wg" x1="0" y1="0" x2="0" y2="1"><stop offset="0" stop-color="#62f97a"/><stop offset="1" stop-color="#1fc23a"/></linearGradient></defs><rect x="0" y="0" width="52" height="52" rx="12" fill="url(#wg)" /><path d="M26 7.6a18 18 0 0 0-15.4 27.4L7.8 44.6l9.8-2.6A18 18 0 1 0 26 7.6z" fill="none" stroke="#fff" stroke-width="3.4" stroke-linejoin="round"/><path d="M19.6 16.4c-1.2.2-3 2-2.6 4.6.6 4 6.400 10.400 12 12.400 2.4.8 4.8-.4 5.6-2.200.4-1 .2-1.600-.2-1.800l-4-2c-.6-.2-1 0-1.400.6l-1.400 1.800c-2.600-1-5.400-3.600-6.600-6.400l1.400-1.600c.4-.4.4-1 .2-1.400l-1.600-3.600c-.2-.4-.8-.6-1.400-.4z" fill="#fff"/></svg>
<svg class="b" style="left:1312px;top:1118.8px;overflow:visible;" width="51.6" height="51.6" viewBox="0 0 52 52"><path d="M3.6 9.6L33 3.4c1.600-.3 2.800 0 4 .9l10.400 7.500c1 .7 1.400 1.500 1.400 2.700v28.700c0 1.800-.8 2.800-2.600 3L17.600 49.600c-1.400.2-2.400-.2-3.200-1.200L4.400 37c-.8-1-1.200-1.900-1.200-3.100V11.600c0-1 .2-1.600.4-2z" fill="#fff" stroke="#fff" stroke-width="6.400" stroke-linejoin="round"/><path d="M3.600 9.600L33 3.400c1.600-.3 2.800 0 4 .9l10.400 7.500c1 .7 1.400 1.500 1.400 2.700v28.700c0 1.800-.8 2.800-2.600 3L17.600 49.600c-1.400.2-2.400-.2-3.200-1.200L4.400 37c-.8-1-1.200-1.900-1.200-3.100V11.600c0-1 .2-1.600.4-2z" fill="#fff" stroke="#000" stroke-width="2.800" stroke-linejoin="round"/><path d="M3.600 9.800l8.800 7c1 .8 2 1 3.400.8l31.600-3.400c.8 0 1.200.4 1.200 1.200" fill="none" stroke="#000" stroke-width="2.800"/><path d="M11.800 16.400v27.800" stroke="#000" stroke-width="3"/><path d="M4 10l8 6.600v27.600L4.400 36z" fill="#000"/><text x="30.400" y="41.400" text-anchor="middle" font-family="Liberation Serif, serif" font-weight="700" font-size="34" fill="#000">N</text></svg>
<svg class="b" style="left:1381.4px;top:1118.8px;overflow:visible;" width="51.6" height="51.6" viewBox="0 0 52 52"><rect x="0" y="0" width="52" height="52" rx="12" fill="#141414" /><path d="M19.500 7.600h6.100v12.200h-6.100a6.100 6.100 0 0 1 0-12.200z" fill="#f5121f"/><path d="M25.600 7.600h6.100a6.100 6.100 0 0 1 0 12.200h-6.100z" fill="#fb6a3a"/><path d="M19.500 19.800h6.100V32h-6.100a6.100 6.100 0 0 1 0-12.200z" fill="#8f3ff0"/><circle cx="31.700" cy="25.900" r="6.100" fill="#1cb6f6"/><path d="M19.500 32h6.100v6.100a6.100 6.100 0 1 1-6.100-6.100z" fill="#22c55a"/></svg>
<svg class="b" style="left:1276.5px;top:1111.8px;" width="26" height="26" viewBox="0 0 26 26"><circle cx="13" cy="13" r="12.4" fill="#e6262f"/><text x="13" y="17.800" text-anchor="middle" font-family="Liberation Sans, sans-serif" font-size="13.400" fill="#fff">87</text></svg>
<div class="b" style="left:1217.8px;top:1117px;width:1.3px;height:62px;background:#4a4a4a;"></div>
<div class="b" style="left:1457.2px;top:1117px;width:1.3px;height:62px;background:#4a4a4a;"></div>
<svg class="b" style="left:1476px;top:1118px;" width="61" height="53" viewBox="0 0 61 53"><path d="M1 8.400c0-3.400 1.600-5 5-5h12.400c2 0 3 .6 4.400 2l2 2c1 1 2 1.400 3.600 1.400H55c3.400 0 5 1.600 5 5V46c0 3.400-1.600 5-5 5H6c-3.400 0-5-1.600-5-5z" fill="#2f9df0"/><path d="M1 17.400c0-2 1-3 3-3h53c2 0 3 1 3 3V46c0 3.400-1.600 5-5 5H6c-3.400 0-5-1.600-5-5z" fill="#52bdfb"/><path d="M3 50.600h55" stroke="#2a8fe6" stroke-width="1.400"/></svg>
<svg class="b" style="left:1548px;top:1112px;" width="56" height="58" viewBox="0 0 56 58"><rect x="12" y="1" width="30" height="16" fill="#f2f2f2" stroke="#9a9a9a" stroke-width=".8"/><rect x="14" y="3" width="12" height="3" fill="#444"/><rect x="15" y="9.400" width="14" height="2" fill="#222"/><rect x="30" y="10" width="7" height="1.600" fill="#e44fb0"/><path d="M0.600 14.400h36.800L55 32v24.400c0 .8-.4 1.200-1.200 1.200H1.800c-.8 0-1.200-.4-1.200-1.200z" fill="#f6f6f6"/><path d="M0.600 44h54.400v12.400c0 .8-.4 1.200-1.200 1.200H1.800c-.8 0-1.200-.4-1.200-1.200z" fill="#ececec"/><path d="M37.400 14.400V28c0 2.600 1.400 4 4 4H55z" fill="#fdfdfd" stroke="#d0d0d0" stroke-width=".8"/><path d="M5 19h30M5 22h30M5 25h22" stroke="#c4c4c4" stroke-width="1.400" stroke-dasharray="4 1.400"/><path d="M5 30h12M5 33h9" stroke="#d6d6d6" stroke-width="1"/><text x="27.600" y="53.400" text-anchor="middle" font-family="Liberation Sans, sans-serif" font-size="8.600" fill="#666">PDF</text></svg>
<svg class="b" style="left:1620.5px;top:1115.5px;" width="49" height="59" viewBox="0 0 49 59"><defs><linearGradient id="trg" x1="0" y1="0" x2="1" y2="0"><stop offset="0" stop-color="#3a3c3e"/><stop offset=".5" stop-color="#55585a"/><stop offset="1" stop-color="#3a3c3e"/></linearGradient></defs><path d="M1.600 6L7.400 53c.4 3 3 5 17.100 5s16.700-2 17.100-5L47.400 6z" fill="url(#trg)"/><ellipse cx="24.500" cy="6" rx="23" ry="4.600" fill="#3c3e40" stroke="#4c4f52" stroke-width="1.200"/></svg>
<div class="b" style="left:267.5px;top:1181.8px;width:5px;height:5px;background:#8c8c8c;border-radius:50%;"></div>
<div class="b" style="left:1097.2px;top:1181.8px;width:5px;height:5px;background:#8c8c8c;border-radius:50%;"></div>
<div class="b" style="left:1166.1px;top:1181.8px;width:5px;height:5px;background:#8c8c8c;border-radius:50%;"></div>
<div class="b" style="left:1265.7px;top:1181.8px;width:5px;height:5px;background:#8c8c8c;border-radius:50%;"></div>
<div class="b" style="left:1404.3px;top:1181.8px;width:5px;height:5px;background:#8c8c8c;border-radius:50%;"></div>
<svg class="b" style="left:0;top:0" width="1915" height="1197" viewBox="0 0 1915 1197"><path fill="#fff" fill-rule="evenodd" d="M0 0H1915V1197H0Z M27.800 0 A27 27 0 0 0 0.800 27 V1175.600 A20 20 0 0 0 20.800 1195.600 H1894 A20 20 0 0 0 1914 1175.600 V27 A27 27 0 0 0 1887 0 Z"/></svg>
</div></body></html>
